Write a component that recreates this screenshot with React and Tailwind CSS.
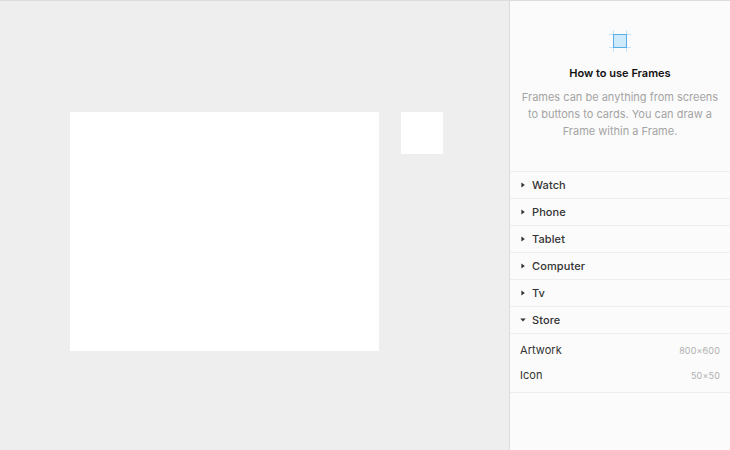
const chevron = (
  <svg width="6" height="6" viewBox="0 0 6 6" className="shrink-0"><path d="M1.4 0.4 L4.8 3 L1.4 5.6 Z" fill="#333333" /></svg>
);
const chevronDown = (
  <svg width="6" height="6" viewBox="0 0 6 6" className="shrink-0"><path d="M0.2 1.4 L5.8 1.4 L3 4.6 Z" fill="#333333" /></svg>
);

function Row({ label, open }) {
  return (
    <div className="flex h-[27px] items-center gap-[6px] border-b border-[#eeeeee] pl-[10px] text-[11px] font-medium tracking-[0.1px] text-[#333333]">
      <span className="flex w-[6px] justify-center">{open ? chevronDown : chevron}</span>
      <span className="pt-[1px]">{label}</span>
    </div>
  );
}

function Item({ name, size }) {
  return (
    <div className="flex h-[25px] items-center justify-between">
      <span className="text-[11px] tracking-[0.05px] text-[#333333]">{name}</span>
      <span className="text-[9px] tracking-[0.15px] text-[#b0b0b0]">{size}</span>
    </div>
  );
}

export default function App() {
  return (
    <div className="flex h-[450px] w-[730px] overflow-hidden border-t border-[#dcdcdc] bg-[#eeeeee] font-['Inter',sans-serif]">
      <main className="relative w-[509px] shrink-0">
        <div className="absolute left-[70px] top-[111px] h-[239px] w-[309px] bg-white" />
        <div className="absolute left-[401px] top-[111px] h-[42px] w-[42px] bg-white" />
      </main>
      <aside className="flex w-[221px] shrink-0 flex-col border-l border-[#dcdcdc] bg-[#fbfbfb]">
        <section className="flex h-[171px] flex-col items-center border-b border-[#eeeeee] pt-[29px]">
          <svg width="22" height="22" viewBox="0 0 22 22">
            <path d="M4.5 0V22M17.5 0V22M0 4.5H22M0 17.5H22" stroke="#c4e4fa" strokeWidth="1" fill="none" />
            <rect x="4.5" y="4.5" width="13" height="13" fill="#cdeafd" stroke="#5aaee6" strokeWidth="1" />
          </svg>
          <h1 className="mt-[13px] text-[11px] font-semibold leading-[16px] text-[#111111]">How to use Frames</h1>
          <p className="mt-[8px] w-[205px] text-center text-[11px] leading-[17px] text-[#a4a4a4]">
            Frames can be anything from screens to buttons to cards. You can draw a Frame within a Frame.
          </p>
        </section>
        <Row label="Watch" />
        <Row label="Phone" />
        <Row label="Tablet" />
        <Row label="Computer" />
        <Row label="Tv" />
        <Row label="Store" open />
        <div className="flex h-[59px] flex-col justify-center border-b border-[#eeeeee] px-[10px]">
          <Item name="Artwork" size="800×600" />
          <Item name="Icon" size="50×50" />
        </div>
      </aside>
    </div>
  );
}
